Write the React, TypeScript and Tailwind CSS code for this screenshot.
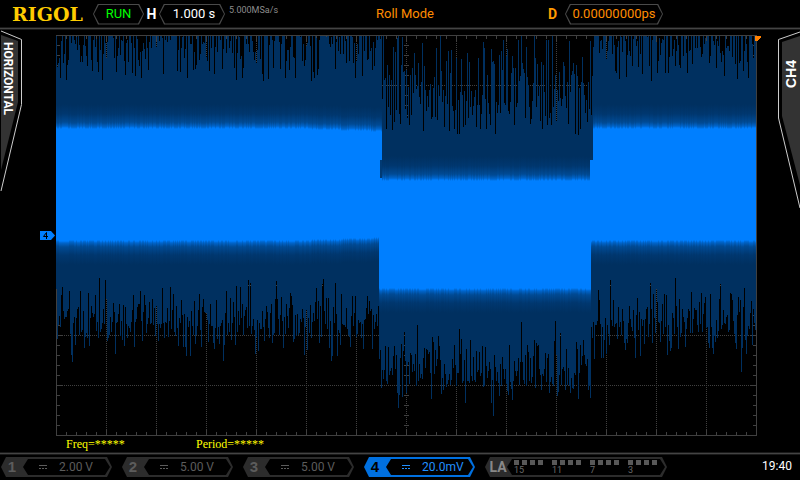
import React from "react";
import { clsx } from "clsx";

const HEX =
  "[clip-path:polygon(5px_0,calc(100%_-_5px)_0,100%_50%,calc(100%_-_5px)_100%,5px_100%,0_50%)]";

const channels = [
  { id: 1, scale: "2.00 V", active: false },
  { id: 2, scale: "5.00 V", active: false },
  { id: 3, scale: "5.00 V", active: false },
  { id: 4, scale: "20.0mV", active: true },
];

const logicGroups = ["15", "11", "7", "3"];

const WIDTH = 700;
const HEIGHT = 400;
const DROP_START = 326;
const DROP_END = 537;

// small seeded generator so the trace is the same on every render
const createRandom = (seed: number) => {
  let s = seed;
  return () => {
    s = (s * 1664525 + 1013904223) % 4294967296;
    return s / 4294967296;
  };
};

const buildTrace = () => {
  const random = createRandom(42);
  const spread = () => random() + random() + random() - 1.5;

  return Array.from({ length: WIDTH }, (_, x) => {
    const topLow = x >= DROP_START && x < DROP_END;
    const bottomLow = x >= DROP_START - 3 && x < DROP_END - 2;
    const bend = x > 240 && x < DROP_START ? Math.round((x - 240) / 30) : 0;

    const limit = topLow ? 100 : 46;
    let peak = (topLow ? 54 : 4) + spread() * (topLow ? 60 : 46);
    if (peak > limit) peak = limit - (peak - limit);
    const valley = (bottomLow ? 334 : 286) + spread() * 36;

    return {
      x,
      peak: Math.max(1, Math.round(peak)),
      valley: Math.round(valley),
      top: (topLow ? 145 : 93) + (topLow ? 0 : bend) + Math.round(random()),
      bottom:
        (bottomLow ? 253 : 205) - (bottomLow ? 0 : bend) + Math.round(random()),
    };
  });
};

const trace = buildTrace();

const range = (from: number, to: number, step: number) => {
  const list: number[] = [];
  for (let i = from; i <= to; i += step) list.push(i);
  return list;
};

const gridLines = [
  ...range(50, WIDTH - 50, 50).map((x) => `M${x + 0.5} 0V${HEIGHT}`),
  ...range(50, HEIGHT - 50, 50).map((y) => `M0 ${y + 0.5}H${WIDTH}`),
].join("");

const ticks = [
  ...range(10, WIDTH - 10, 10).map((x) => {
    const len = x % 50 === 0 ? 6 : 3;
    return `M${x + 0.5} 1v${len}M${x + 0.5} ${HEIGHT}v-${len}`;
  }),
  ...range(10, HEIGHT - 10, 10).map((y) => {
    const len = y % 50 === 0 ? 6 : 3;
    return `M1 ${y + 0.5}h${len}M${WIDTH} ${y + 0.5}h-${len}M348 ${y + 0.5}h5`;
  }),
].join("");

const Plot = () => (
  <svg
    viewBox="0 0 701 401"
    className="block h-auto min-w-0 flex-1 overflow-visible"
    shapeRendering="crispEdges"
    role="img"
    aria-label="Channel 4 trace"
  >
    <defs>
      <linearGradient id="rise" x1="0" y1="0" x2="0" y2="1">
        <stop offset="0" stopColor="#003060" />
        <stop offset="0.4" stopColor="#00376f" />
        <stop offset="0.75" stopColor="#004a94" />
        <stop offset="0.92" stopColor="#0065cc" />
        <stop offset="1" stopColor="#007fff" />
      </linearGradient>
      <linearGradient id="fall" x1="0" y1="1" x2="0" y2="0">
        <stop offset="0" stopColor="#003060" />
        <stop offset="0.4" stopColor="#00376f" />
        <stop offset="0.75" stopColor="#004a94" />
        <stop offset="0.92" stopColor="#0065cc" />
        <stop offset="1" stopColor="#007fff" />
      </linearGradient>
    </defs>

    <path d={gridLines} stroke="#404040" strokeDasharray="1 1" />
    <path d={ticks} stroke="#404040" />
    <rect x="0.5" y="0.5" width="700" height="400" fill="none" stroke="#404040" />

    {trace.map(({ x, peak, valley, top, bottom }) => (
      <React.Fragment key={x}>
        <rect x={x} y={peak} width="1" height={valley - peak} fill="#003060" />
        <rect x={x} y={top - 24} width="1" height="24" fill="url(#rise)" />
        <rect x={x} y={top} width="1" height={bottom - top} fill="#007fff" />
        <rect x={x} y={bottom} width="1" height="24" fill="url(#fall)" />
      </React.Fragment>
    ))}

    {/* level jumps */}
    <rect x="324" y="125" width="2" height="18" fill="#003a74" />
    <rect x="534" y="125" width="3" height="24" fill="#007fff" />

    <path d="M699 1h6v2l-4 3h-2z" fill="#ff8000" />
  </svg>
);

interface ReadoutProps {
  className?: string;
  children: React.ReactNode;
}

const Readout = ({ className, children }: ReadoutProps) => (
  <button className={clsx("h-[21px] bg-[#4a4a4a] p-px", HEX)}>
    <span
      className={clsx("flex h-full items-center justify-center bg-black", HEX, className)}
    >
      {children}
    </span>
  </button>
);

const Header = () => (
  <header className="flex h-[27px] items-center pt-px text-[13px]">
    <div className="flex w-[47%] items-center pl-3">
      <h1 className="w-[81px] font-['DejaVu_Serif'] text-[19px] leading-6 font-bold text-[#ffcc00]">
        RIGOL
      </h1>
      <Readout className="w-[49px] text-[#00ff00]">RUN</Readout>
      <span className="w-[15px] text-center text-sm font-bold">H</span>
      <Readout className="w-[64px] pl-1">1.000 s</Readout>
      <span className="mb-2 ml-1 text-[9px] leading-3 text-[#8c8c8c]">
        5.000MSa/s
      </span>
    </div>
    <p className="text-[#ff8c00]">Roll Mode</p>
    <div className="mr-[137px] ml-auto flex items-center gap-2">
      <span className="text-sm font-bold text-[#ff9900]">D</span>
      <Readout className="w-[96px] text-[#ff8c00]">0.00000000ps</Readout>
    </div>
  </header>
);

const Divider = () => (
  <div className="h-[3px] border-y border-[#1a1a1a] bg-[#444]" />
);

const HorizontalTab = () => (
  <button className="grid h-[162px] w-[22px]">
    <svg viewBox="0 0 22 162" className="h-full w-full [grid-area:1/1]">
      <path d="M1 5l17 6v61L1 140z" fill="#333" />
      <path d="M1 1l20.500 8.500v65L1 161" fill="none" stroke="#ccc" />
    </svg>
    <span className="self-start justify-self-start pt-3 text-xs leading-4 font-bold [grid-area:1/1] [writing-mode:vertical-rl]">
      HORIZONTAL
    </span>
  </button>
);

const ChannelTab = () => (
  <button className="grid h-[180px] w-[22px]">
    <svg viewBox="0 0 22 180" className="h-full w-full [grid-area:1/1]">
      <path d="M22 6L4 12v74l18 69z" fill="#333" />
      <path d="M22 2L.5 9.500V88L22 178" fill="none" stroke="#ccc" />
    </svg>
    <span className="mt-[30px] ml-[5px] rotate-180 self-start justify-self-start font-['Liberation_Sans',sans-serif] text-sm leading-4 font-bold [grid-area:1/1] [writing-mode:vertical-rl]">
      CH4
    </span>
  </button>
);

interface ChannelProps {
  id: number;
  scale: string;
  active: boolean;
}

const Channel = ({ id, scale, active }: ChannelProps) => (
  <button
    className={clsx(
      "flex h-5 w-[111px] shrink-0 p-0.5 pl-0",
      HEX,
      active ? "bg-[#0070e0] text-[#2090ff]" : "bg-[#2c2c2c] text-[#5c5c5c]"
    )}
  >
    <span
      className={clsx(
        "w-[22px] text-center font-['Liberation_Sans',sans-serif] text-[15px] leading-4 font-bold",
        active && "text-black"
      )}
    >
      {id}
    </span>
    <span
      className={clsx("flex h-4 flex-1 items-center bg-black pl-4 text-xs", HEX)}
    >
      <svg
        viewBox="0 0 8 6"
        className="mr-3 h-1.5 w-2"
        stroke="currentColor"
        shapeRendering="crispEdges"
      >
        <path d="M0 1.500h8" />
        <path d="M0 4.500h8" strokeDasharray="2 1" />
      </svg>
      {scale}
    </span>
  </button>
);

const LogicAnalyzer = () => (
  <button
    className={clsx("flex h-5 w-[182px] shrink-0 bg-[#2c2c2c] p-0.5 pl-0", HEX)}
  >
    <span className="w-[22px] pl-1 text-center text-sm leading-4 font-bold text-[#888]">
      LA
    </span>
    <span className={clsx("flex h-4 flex-1 gap-[9px] bg-black pt-px pl-[7px]", HEX)}>
      {logicGroups.map((label) => (
        <span key={label} className="flex flex-col items-start">
          <span className="flex gap-[3px]">
            {range(0, 3, 1).map((bit) => (
              <span key={bit} className="size-[5px] bg-[#585858]" />
            ))}
          </span>
          <span className="text-[9px] leading-[11px] text-[#6a6a6a]">{label}</span>
        </span>
      ))}
    </span>
  </button>
);

export default function App() {
  return (
    <div className="min-h-screen overflow-hidden bg-black font-['Roboto','Liberation_Sans',sans-serif] text-white">
      <Header />
      <Divider />

      <main>
        <div className="flex items-start">
          <div className="relative w-14 shrink-0 self-stretch">
            <HorizontalTab />
            {/* channel 4 zero level */}
            <svg
              viewBox="0 0 15 9"
              className="absolute top-1/2 right-px -mt-0.5 h-[9px] w-[15px]"
            >
              <path d="M0 0h11l4 4.500L11 9H0z" fill="#007fff" />
              <path d="M6.500 8V1.500L3.500 5.500H8" fill="none" stroke="#000" />
            </svg>
          </div>
          <div className="flex min-w-0 flex-1 pt-[5px]">
            <Plot />
          </div>
          <div className="flex w-[43px] shrink-0 justify-end">
            <ChannelTab />
          </div>
        </div>

        <div className="flex h-4 items-center pl-[66px] font-['Liberation_Serif',serif] text-xs text-[#ffff00]">
          <p className="w-[130px]">Freq=*****</p>
          <p>Period=*****</p>
        </div>
      </main>

      <Divider />
      <footer className="flex h-[25px] items-start gap-2.5 pt-0.5 pr-2 pl-px">
        {channels.map((channel) => (
          <Channel key={channel.id} {...channel} />
        ))}
        <LogicAnalyzer />
        <time className="ml-auto text-xs leading-[18px]">19:40</time>
      </footer>
    </div>
  );
}
